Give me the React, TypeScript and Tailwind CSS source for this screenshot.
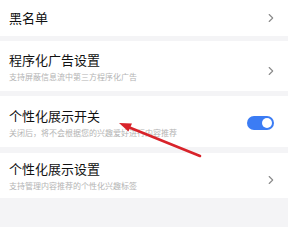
import React from 'react';

const font = { fontFamily: '"Noto Sans CJK SC", "Noto Sans", sans-serif' };

function Chevron() {
    return (
        <svg width="6" height="10" viewBox="0 0 6 10" fill="none" className="shrink-0">
            <path d="M1.2 1.5l3.5 3.5-3.5 3.5" stroke="#8a8a8a" strokeWidth="1.1" strokeLinecap="round" strokeLinejoin="round" />
        </svg>
    );
}

function Toggle() {
    return (
        <div className="w-[27px] h-[14px] rounded-full bg-[#3b7cf4] flex items-center justify-end pr-[2px] shrink-0">
            <div className="w-[10px] h-[10px] rounded-full bg-white" />
        </div>
    );
}

function Row({ title, sub, right, className }: { title: string; sub?: string; right: React.ReactNode; className: string }) {
    return (
        <div className={`bg-white flex items-center justify-between pl-[9px] pr-[14px] ${className}`}>
            <div className="flex flex-col">
                <div className="text-[13px] leading-[16px] text-[#111111]">{title}</div>
                {sub && <div className="text-[8px] leading-[10px] text-[#b4b4b4] mt-[4px]">{sub}</div>}
            </div>
            {right}
        </div>
    );
}

export default function App() {
    return (
        <div className="relative w-[288px] h-[227px] bg-[#f4f4f6] overflow-hidden flex flex-col" style={font}>
            <Row title="黑名单" right={<Chevron />} className="h-[36px]" />
            <Row
                title="程序化广告设置"
                sub="支持屏蔽信息流中第三方程序化广告"
                right={<div className="pt-[8px]"><Chevron /></div>}
                className="h-[50px] mt-[5px] pt-[2px]"
            />
            <Row
                title="个性化展示开关"
                sub="关闭后，将不会根据您的兴趣爱好进行内容推荐"
                right={<Toggle />}
                className="h-[51px] mt-[5px] pt-[2px]"
            />
            <Row
                title="个性化展示设置"
                sub="支持管理内容推荐的个性化兴趣标签"
                right={<div className="pt-[8px]"><Chevron /></div>}
                className="h-[45px] mt-[6px]"
            />

            {/* red annotation arrow */}
            <svg className="absolute left-0 top-0" width="288" height="227" viewBox="0 0 288 227">
                <line x1="200" y1="156" x2="127" y2="126.5" stroke="#d8232a" strokeWidth="2.6" strokeLinecap="round" />
                <path d="M119 123 L132 123.6 L128.4 131.6 Z" fill="#d8232a" />
            </svg>
        </div>
    );
}
